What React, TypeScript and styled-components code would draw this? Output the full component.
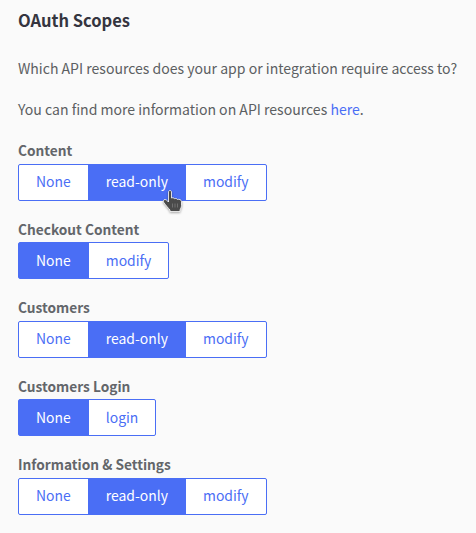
import React from "react";
import styled, { createGlobalStyle } from "styled-components";

const Global = createGlobalStyle`
  html, body { margin: 0; padding: 0; background: #fafafa; }
  body { font-family: "Noto Sans CJK SC", "Noto Sans", sans-serif; }
`;

const Page = styled.div`
  width: 476px;
  height: 533px;
  overflow: hidden;
  padding: 9px 18px 0;
  box-sizing: border-box;
  background: #fafafa;
`;

const Title = styled.h2`
  margin: 0 0 24px;
  font-size: 16.5px;
  line-height: 23px;
  font-weight: 700;
  color: #35353f;
`;

const Paragraph = styled.p`
  margin: 0 0 17px;
  font-size: 14.05px;
  line-height: 24px;
  color: #5c5f62;
  white-space: nowrap;
`;

const TextLink = styled.a`
  color: #4a6ef5;
  text-decoration: none;
`;

const ScopeList = styled.div`
  display: flex;
  flex-direction: column;
  gap: 19px;
  margin-top: 20px;
`;

const Scope = styled.section``;

const ScopeLabel = styled.div`
  font-size: 13.7px;
  line-height: 18px;
  font-weight: 700;
  color: #63666a;
  margin-bottom: 4.5px;
`;

const Segmented = styled.div`
  display: inline-flex;
  position: relative;
  height: 37px;
  box-sizing: border-box;
  border: 1px solid #4a6ef5;
  border-radius: 2px;
  background: #fff;
  vertical-align: top;
`;

const Segment = styled.div<{ $active?: boolean }>`
  display: flex;
  align-items: center;
  justify-content: center;
  padding: 0 17px 2px;
  font-size: 13.95px;
  color: ${(p) => (p.$active ? "#fff" : "#4a6ef5")};
  background: ${(p) => (p.$active ? "#4a6ef5" : "transparent")};
  & + & {
    border-left: 1px solid #4a6ef5;
  }
`;

const Pointer = styled.svg`
  position: absolute;
  left: 141px;
  top: 23px;
  width: 26px;
  height: 26px;
  filter: drop-shadow(0 1px 1px rgba(0, 0, 0, 0.35));
`;

const HandCursor = () => (
  <Pointer viewBox="0 0 26 26">
    <path
      d="M8.5 4C8.5 2 11.5 2 11.5 4V10C12.5 9.5 14 9.7 14.5 10.7C15.5 10.2 17 10.5 17.5 11.5C18.7 11 21.5 11.5 21.5 13.5V17.5C21.5 19.5 20.5 20.5 20 22V23.5H10V22C8.5 20.5 6 17.5 3.8 14.5C2.8 13 3.5 11.5 5 11.5C6.2 11.5 7.5 12.8 8.5 14Z"
      fill="#4a4a4a"
      stroke="#fff"
      strokeWidth="0.8"
      strokeLinejoin="round"
    />
    <path d="M12.5 15.5V19.5M15 15.5V19.5M17.5 15.5V19.5" stroke="#8a8a8a" strokeWidth="0.6" fill="none" />
  </Pointer>
);

const scopes: { label: string; options: string[]; active: string; cursor?: boolean }[] = [
  { label: "Content", options: ["None", "read-only", "modify"], active: "read-only", cursor: true },
  { label: "Checkout Content", options: ["None", "modify"], active: "None" },
  { label: "Customers", options: ["None", "read-only", "modify"], active: "read-only" },
  { label: "Customers Login", options: ["None", "login"], active: "None" },
  { label: "Information & Settings", options: ["None", "read-only", "modify"], active: "read-only" },
];

export default function App() {
  return (
    <Page>
      <Global />
      <Title>OAuth Scopes</Title>
      <Paragraph>Which API resources does your app or integration require access to?</Paragraph>
      <Paragraph>
        You can find more information on API resources <TextLink>here</TextLink>.
      </Paragraph>
      <ScopeList>
        {scopes.map((s) => (
          <Scope key={s.label}>
            <ScopeLabel>{s.label}</ScopeLabel>
            <Segmented>
              {s.options.map((o) => (
                <Segment key={o} $active={o === s.active}>
                  {o}
                </Segment>
              ))}
              {s.cursor && <HandCursor />}
            </Segmented>
          </Scope>
        ))}
      </ScopeList>
    </Page>
  );
}
